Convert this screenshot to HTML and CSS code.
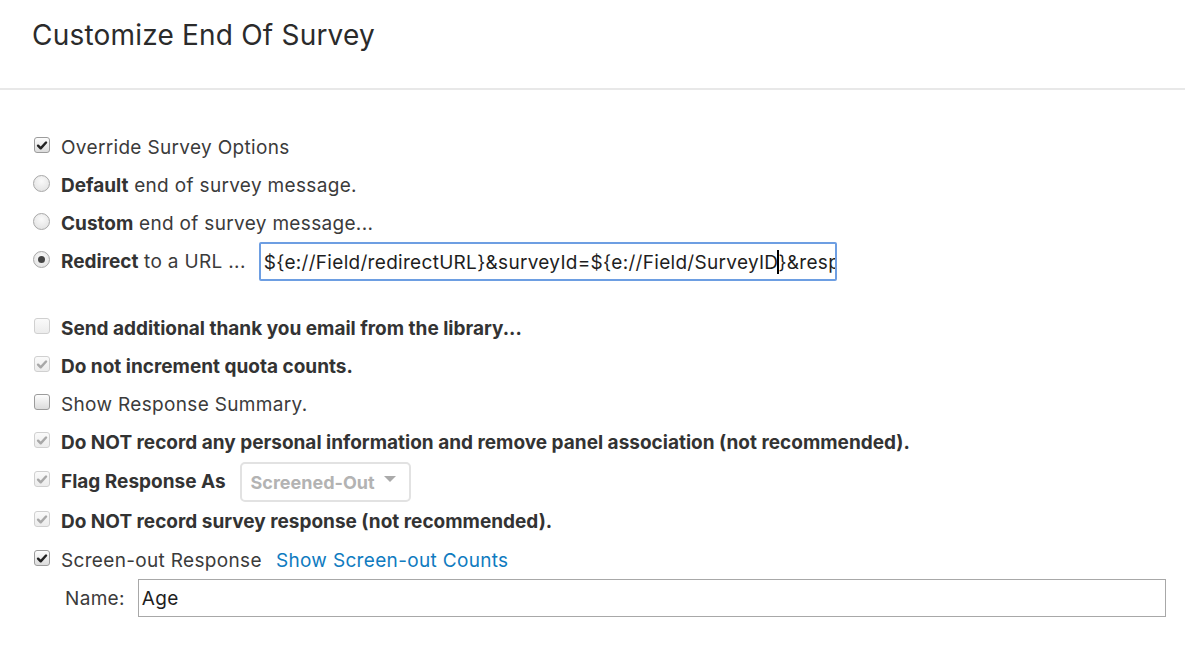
FILE: index.html
```html
<!DOCTYPE html>
<html>
<head>
<meta charset="utf-8">
<link rel="stylesheet" href="styles.css">
</head>
<body>
<header class="header">
  <h1 class="title">Customize End Of Survey</h1>
</header>
<main class="content">
  <section class="group">
    <div class="row">
      <span class="cb checked"><svg viewBox="0 0 16 16"><path d="M3.5 8.2 L6.5 11.2 L12.6 4.6" /></svg></span>
      <span class="label">Override Survey Options</span>
    </div>
    <div class="row">
      <span class="radio"></span>
      <span class="label"><b>Default</b> end of survey message.</span>
    </div>
    <div class="row">
      <span class="radio"></span>
      <span class="label"><b>Custom</b> end of survey message...</span>
    </div>
    <div class="row row-tall">
      <span class="radio selected"></span>
      <span class="label"><b>Redirect</b> to a URL ...</span>
      <div class="url-input"><span class="url-text">${e://Field/redirectURL}&amp;surveyId=${e://Field/SurveyID<span class="caret"></span>}&amp;resp</span></div>
    </div>
  </section>
  <section class="group group-options">
    <div class="row">
      <span class="cb disabled"></span>
      <span class="label"><b>Send additional thank you email from the library...</b></span>
    </div>
    <div class="row">
      <span class="cb disabled checked"><svg viewBox="0 0 16 16"><path d="M3.5 8.2 L6.5 11.2 L12.6 4.6" /></svg></span>
      <span class="label"><b>Do not increment quota counts.</b></span>
    </div>
    <div class="row">
      <span class="cb"></span>
      <span class="label">Show Response Summary.</span>
    </div>
    <div class="row">
      <span class="cb disabled checked"><svg viewBox="0 0 16 16"><path d="M3.5 8.2 L6.5 11.2 L12.6 4.6" /></svg></span>
      <span class="label"><b>Do NOT record any personal information and remove panel association (not recommended).</b></span>
    </div>
    <div class="row row-flag">
      <span class="cb disabled checked"><svg viewBox="0 0 16 16"><path d="M3.5 8.2 L6.5 11.2 L12.6 4.6" /></svg></span>
      <span class="label"><b>Flag Response As</b></span>
      <div class="dropdown">
        <span class="dropdown-text">Screened-Out</span>
        <span class="dropdown-caret"></span>
      </div>
    </div>
    <div class="row row-flag">
      <span class="cb disabled checked"><svg viewBox="0 0 16 16"><path d="M3.5 8.2 L6.5 11.2 L12.6 4.6" /></svg></span>
      <span class="label"><b>Do NOT record survey response (not recommended).</b></span>
    </div>
    <div class="row">
      <span class="cb checked"><svg viewBox="0 0 16 16"><path d="M3.5 8.2 L6.5 11.2 L12.6 4.6" /></svg></span>
      <span class="label">Screen-out Response</span>
      <a class="link" href="#">Show Screen-out Counts</a>
    </div>
    <div class="row name-row">
      <span class="name-label">Name:</span>
      <div class="name-input">Age</div>
    </div>
  </section>
</main>
</body>
</html>
```
FILE: styles.css
```css
* { box-sizing: border-box; }
html, body { margin: 0; padding: 0; background: #fff; }
body {
  font-family: Inter, "Liberation Sans", sans-serif;
  color: #3b3b3b;
  width: 1185px;
  height: 651px;
  overflow: hidden;
}
.header {
  height: 90px;
  border-bottom: 2px solid #e8e8e8;
  padding: 16px 0 0 32px;
}
.title {
  margin: 0;
  font-size: 28px;
  font-weight: 400;
  letter-spacing: 0.2px;
  color: #2b2b2b;
  line-height: 38px;
}
.content {
  padding: 38px 0 0 33px;
}
.group { display: flex; flex-direction: column; }
.group-options { margin-top: 28px; }
.row {
  display: flex;
  align-items: center;
  height: 38px;
  font-size: 19px;
  letter-spacing: 0.33px;
}
.row-tall { height: 39px; }
.row-flag { height: 40px; }
.label { margin-left: 11px; white-space: nowrap; }
.label b { font-weight: 700; color: #333; letter-spacing: 0; }
.cb {
  width: 16px;
  height: 16px;
  margin-left: 1px;
  border: 1px solid #9c9c9c;
  border-radius: 3px;
  background: linear-gradient(#fdfdfd, #dcdcdc);
  display: flex;
  align-items: center;
  justify-content: center;
  flex: none;
  margin-top: -4px;
}
.cb svg { width: 15px; height: 15px; }
.cb svg path { fill: none; stroke: #222; stroke-width: 2.8; stroke-linecap: round; stroke-linejoin: round; }
.cb.disabled { border-color: #d0d0d0; background: linear-gradient(#fafafa, #ececec); }
.cb.disabled svg path { stroke: #a8a8a8; }
.radio {
  width: 17px;
  height: 17px;
  border-radius: 50%;
  border: 1px solid #a8a8a8;
  background: radial-gradient(circle at 50% 35%, #fafafa, #dedede);
  flex: none;
  display: flex;
  align-items: center;
  justify-content: center;
  margin-top: -4px;
}
.radio.selected::after {
  content: "";
  width: 7px;
  height: 7px;
  border-radius: 50%;
  background: #444;
}
.url-input {
  margin-left: 13px;
  width: 578px;
  height: 39px;
  border: 2px solid #6d9ee2;
  border-radius: 2px;
  overflow: hidden;
  white-space: nowrap;
  padding: 0 0 0 3px;
  display: flex;
  align-items: center;
  color: #1e1e1e;
  font-size: 19px;
  letter-spacing: 0.3px;
}
.caret {
  display: inline-block;
  width: 0;
  height: 24px;
  border-left: 2px solid #000;
  margin: 0 -1px;
  vertical-align: -5px;
}
.dropdown {
  margin-left: 14px;
  width: 171px;
  height: 40px;
  border: 2px solid #e2e2e2;
  border-radius: 5px;
  display: flex;
  align-items: center;
  padding: 0 0 0 9px;
  margin-top: 2px;
  flex: none;
}
.dropdown-text { color: #b3b3b3; font-weight: 700; font-size: 18px; white-space: nowrap; letter-spacing: 0; }
.dropdown-caret {
  margin-left: auto;
  margin-right: 13px;
  width: 0;
  height: 0;
  border-left: 6px solid transparent;
  border-right: 6px solid transparent;
  border-top: 6px solid #aaa;
  margin-top: -6px;
  flex: none;
}
.link {
  margin-left: 14px;
  color: #0f7bc0;
  text-decoration: none;
  white-space: nowrap;
}
.name-row { padding-left: 32px; }
.name-label { color: #3b3b3b; }
.name-input {
  margin-left: 13px;
  width: 1028px;
  height: 38px;
  border: 1px solid #a8a8a8;
  padding: 0 0 0 3px;
  display: flex;
  align-items: center;
  color: #1e1e1e;
}
```
